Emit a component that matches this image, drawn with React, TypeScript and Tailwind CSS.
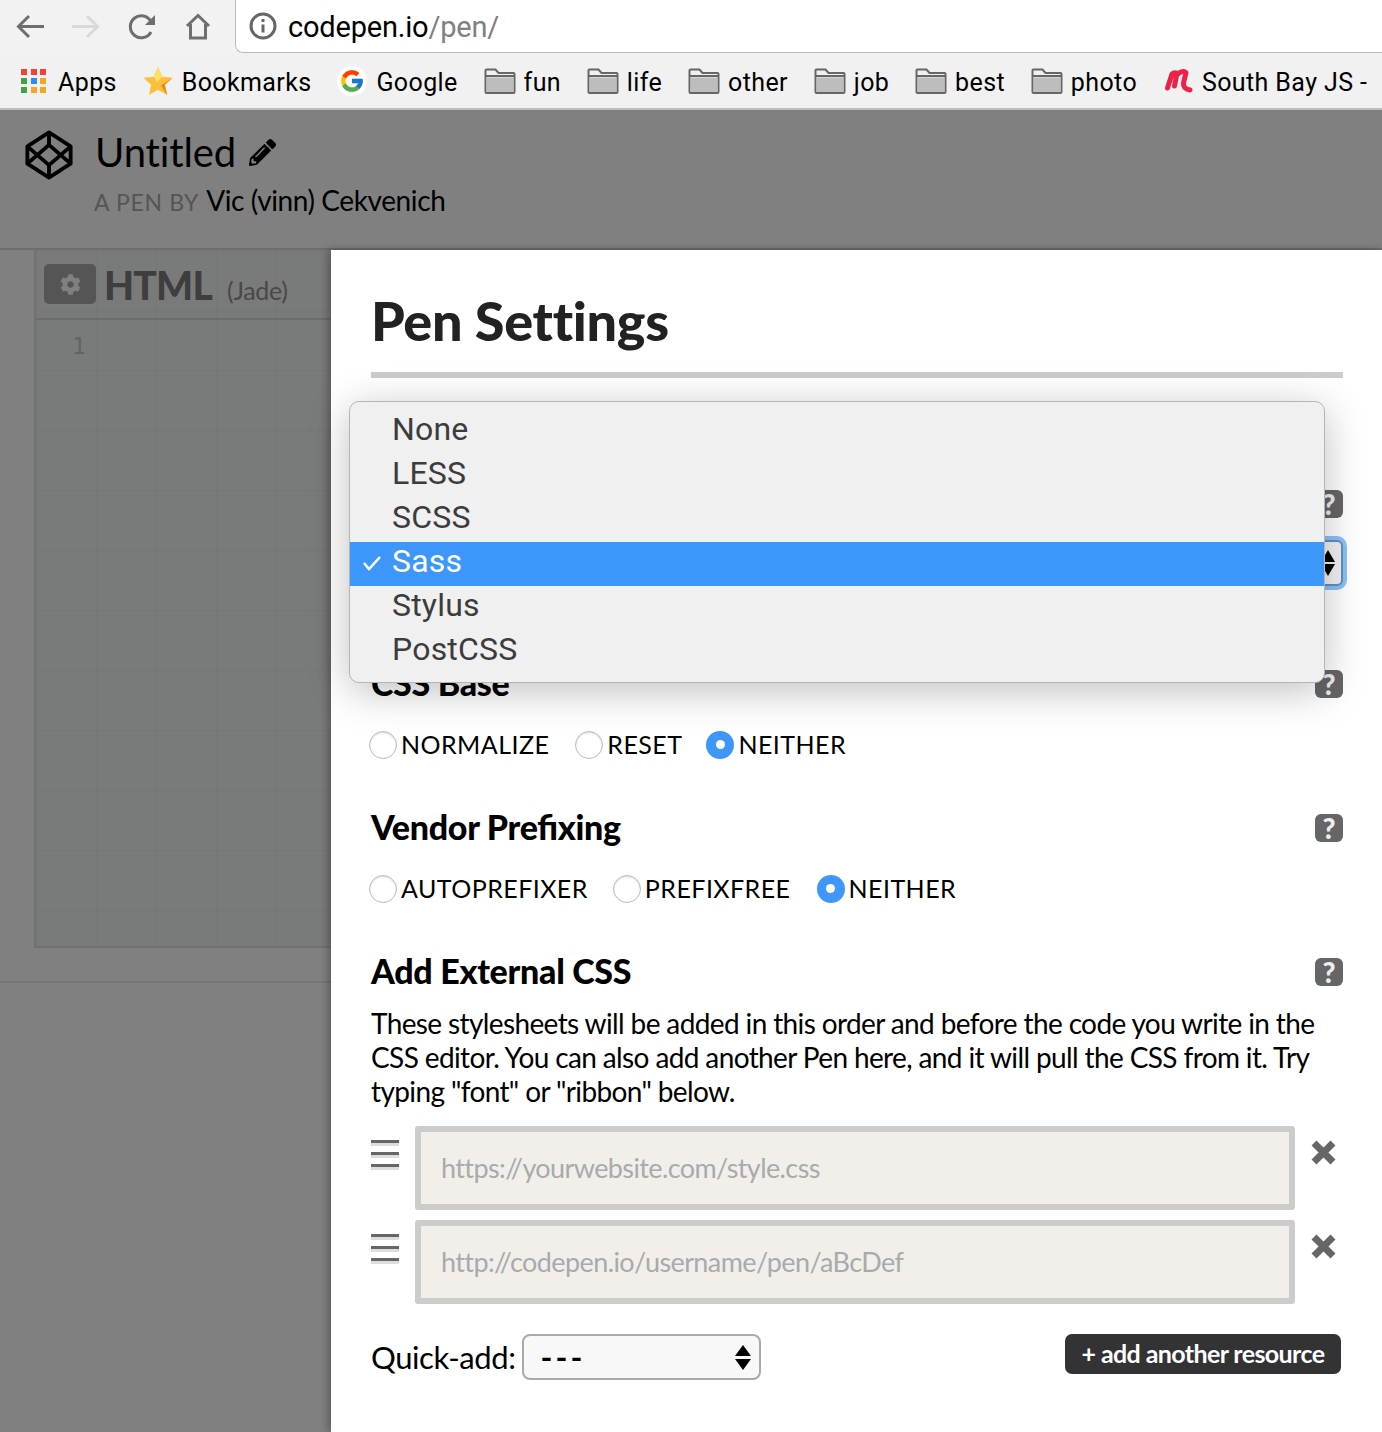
import { FaCog, FaPencilAlt } from "react-icons/fa";
import { FcGoogle } from "react-icons/fc";

const sans = "font-['Lato','Open_Sans',sans-serif]";
const system = "font-['Roboto','Liberation_Sans',sans-serif]";

const FolderIcon = () => (
  <svg width="32" height="26" viewBox="0 0 32 26" className="shrink-0">
    <path d="M1.5 24V2.5a1 1 0 0 1 1-1h9l3 3.5h15a1 1 0 0 1 1 1V24a1 1 0 0 1-1 1h-27a1 1 0 0 1-1-1z" fill="#f0f0f0" stroke="#666" strokeWidth="2" />
    <path d="M2.5 9.5h27V24h-27z" fill="#bdbdbd" />
    <path d="M1.5 8h29" stroke="#666" strokeWidth="2" />
  </svg>
);

const AppsIcon = () => (
  <div className="grid grid-cols-3 gap-[3px] w-[26px] shrink-0">
    {["#f44336", "#f44336", "#f44336", "#43a047", "#2d8cf0", "#f5a623", "#43a047", "#f5a623", "#f5a623"].map((c, i) => (
      <span key={i} className="h-[6px] w-[6px]" style={{ backgroundColor: c }} />
    ))}
  </div>
);

const StarIcon = () => (
  <svg width="30" height="30" viewBox="0 0 32 32" className="shrink-0">
    <path d="M16 1l4.600 10.400 11 1.100-8.300 7.400 2.400 11L16 25.200 6.300 30.900l2.400-11L.4 12.500l11-1.100z" fill="#fbbf3a" />
    <path d="M16 1l4.600 10.400-5.600 5.600-3.600-5.600z" fill="#fde068" />
    <path d="M31.600 12.500l-8.300 7.400 2.400 11-6.500-10z" fill="#e08e1b" />
  </svg>
);

const MeetupIcon = () => (
  <svg width="31" height="30" viewBox="0 0 31 30" className="shrink-0">
    <path d="M4.500 22L9 8Q11 6 14 7L11.500 20M15 8Q19 4 23 6.500L20.500 17Q20 23 27 24" fill="none" stroke="#ee2048" strokeWidth="5" strokeLinecap="round" strokeLinejoin="round" />
  </svg>
);

const Bookmark = ({ icon, label, gap = "gap-2" }: { icon: React.ReactNode; label: string; gap?: string }) => (
  <div className={`flex items-center shrink-0 ${gap}`}>
    {icon}
    <span className="mt-[5px]">{label}</span>
  </div>
);

const HelpBadge = () => (
  <div className={`flex h-[28px] w-[28px] items-center justify-center rounded-[6px] bg-[#666] text-[28px] font-black text-[#eee] ${sans}`}>?</div>
);

const Radio = ({ label, checked, gap }: { label: string; checked?: boolean; gap: string }) => (
  <div className={`flex items-center ${gap}`}>
    {checked ? (
      <span className="flex h-[28px] w-[28px] items-center justify-center rounded-full bg-[#3f97f9]">
        <span className="h-[9px] w-[9px] rounded-full bg-white" />
      </span>
    ) : (
      <span className="h-[28px] w-[28px] rounded-full border border-[#bbb] bg-white shadow-[inset_0_1px_2px_rgba(0,0,0,0.15)]" />
    )}
    <span className="ml-[4px] tracking-[0.45px]">{label}</span>
  </div>
);

const Heading = ({ title }: { title: string }) => (
  <div className="flex h-[44px] items-center justify-between">
    <h3 className="pb-[4px] text-[34px] font-black tracking-[-0.3px] text-black [font-feature-settings:'liga'_1]">{title}</h3>
    <HelpBadge />
  </div>
);

const ResourceRow = ({ placeholder }: { placeholder: string }) => (
  <div className="flex items-start">
    <div className="mt-[14px] flex w-[28px] flex-col gap-[6px]">
      {[0, 1, 2].map((i) => (
        <span key={i} className="h-[6px] border-t-[3px] border-[#666] bg-[#ddd]" />
      ))}
    </div>
    <div className="ml-[16px] flex h-[84px] w-[880px] items-center rounded-[3px] border-[6px] border-[#ccc] bg-[#f2efea] pl-[20px] text-[27px] tracking-[-0.6px] text-[#aaa]">
      {placeholder}
    </div>
    <svg width="25" height="25" viewBox="0 0 25 25" fill="none" stroke="#666" strokeWidth="7" className="ml-[16px] mt-[14px] shrink-0">
      <path d="M3 3l19 19M22 3L3 22" />
    </svg>
  </div>
);

export default function App() {
  return (
    <div className={`flex h-[1432px] w-[1382px] flex-col overflow-hidden bg-[#808080] ${sans}`}>
      {/* Browser toolbar */}
      <div className="flex h-[53px] shrink-0 items-center bg-[#f2f2f2]">
        <div className="flex w-[235px] shrink-0 items-center pl-[16px] gap-[28px]">
          <svg width="28" height="28" viewBox="0 0 28 28" fill="none" stroke="#6e6e6e" strokeWidth="3"><path d="M28 13.500H3M13 3L2.500 13.500 13 24" /></svg>
          <svg width="28" height="28" viewBox="0 0 28 28" fill="none" stroke="#d9d9d9" strokeWidth="3"><path d="M0 13.500h25M15 3l10.500 10.500L15 24" /></svg>
          <svg width="28" height="28" viewBox="0 0 28 28" fill="none" stroke="#6e6e6e" strokeWidth="3"><path d="M23 19a11 11 0 1 1 0-10.500" /><path d="M27 2v10H17z" fill="#6e6e6e" stroke="none" /></svg>
          <svg width="28" height="28" viewBox="0 0 28 28" fill="none" stroke="#6e6e6e" strokeWidth="3"><path d="M3 13L14 2.500 25 13M6.500 11v14h15V11" /></svg>
        </div>
        <div className={`flex h-[53px] flex-1 items-center rounded-bl-[8px] border-b border-l border-[#bbb] bg-white pl-[13px] text-[29px] tracking-[-0.2px] ${system}`}>
          <svg width="28" height="28" viewBox="0 0 28 28" fill="none" stroke="#666" strokeWidth="3" className="shrink-0">
            <circle cx="14" cy="14" r="12" />
            <path d="M14 12.500v8M14 7v3" />
          </svg>
          <span className="ml-[11px] mt-[4px] text-black">codepen.io</span>
          <span className="mt-[4px] text-[#808080]">/pen/</span>
        </div>
      </div>

      {/* Bookmarks bar */}
      <div className={`flex h-[57px] shrink-0 items-center gap-[25.8px] overflow-hidden border-b-2 border-[#bdbdbd] bg-[#f1f1f1] pl-[21px] text-[25px] tracking-[0.4px] text-black ${system}`}>
        <Bookmark icon={<AppsIcon />} label="Apps" gap="gap-[11px]" />
        <Bookmark icon={<StarIcon />} label="Bookmarks" gap="gap-[9px]" />
        <Bookmark
          icon={
            <span className="flex h-[30px] w-[30px] items-center justify-center rounded-full bg-white">
              <FcGoogle size={26} />
            </span>
          }
          label="Google"
          gap="gap-[9px]"
        />
        <Bookmark icon={<FolderIcon />} label="fun" />
        <Bookmark icon={<FolderIcon />} label="life" />
        <Bookmark icon={<FolderIcon />} label="other" />
        <Bookmark icon={<FolderIcon />} label="job" />
        <Bookmark icon={<FolderIcon />} label="best" />
        <Bookmark icon={<FolderIcon />} label="photo" />
        <Bookmark icon={<MeetupIcon />} label="South Bay JS -" />
      </div>

      {/* Pen header, dimmed behind the modal */}
      <div className="flex h-[140px] shrink-0 items-start border-b-2 border-[#6e6e6e] pl-[24px] pt-[20px]">
        <svg width="50" height="50" viewBox="0 0 50 52" fill="none" stroke="#000" strokeWidth="4" strokeLinejoin="round" className="shrink-0">
          <path d="M25 2.500L47.500 17v18L25 49.500 2.500 35V17zM25 2.500v13M25 36.500v13M2.500 17L25 36.500 47.500 17M2.500 35L25 15.500 47.500 35" />
        </svg>
        <div className="ml-[20px] flex flex-col">
          <div className="flex h-[44px] items-center">
            <span className="ml-[1px] text-[40px] tracking-[-0.15px] text-black">Untitled</span>
            <FaPencilAlt className="ml-[13px] text-black" size={27} />
          </div>
          <div className="mt-[5px] flex h-[34px] items-baseline">
            <span className="text-[23px] tracking-[0.65px] text-[#555]">A PEN BY</span>
            <span className="ml-[7px] text-[28px] tracking-[-0.4px] text-black">Vic (vinn) Cekvenich</span>
          </div>
        </div>
      </div>

      <div className="relative flex min-h-0 flex-1">
        {/* Editor column */}
        <div className="flex w-[331px] shrink-0 flex-col">
          <div className="flex h-[698px] shrink-0 pl-[34px]">
            <div className="flex-1 border-l-2 border-b-2 border-[#727272] bg-[#797b7a] bg-[linear-gradient(#757776_1px,transparent_1px),linear-gradient(90deg,#757776_1px,transparent_1px)] bg-[size:60px_60px]">
              <div className="flex h-[70px] items-center border-b-2 border-[#6c6c6c] pl-[8px]">
                <div className="flex h-[40px] w-[52px] items-center justify-center rounded-[5px] bg-[#555]">
                  <FaCog className="text-[#808080]" size={21} />
                </div>
                <span className="ml-[8px] mt-[2px] text-[39px] font-black tracking-[-0.8px] text-[#3e3e3e]">HTML</span>
                <span className="ml-[15px] mt-[14px] text-[25px] tracking-[-0.3px] text-[#484848]">(Jade)</span>
              </div>
              <div className="pl-[36px] pt-[9px] font-['DejaVu_Sans_Mono',monospace] text-[23px] leading-[34px] text-[#636363]">1</div>
            </div>
          </div>
          <div className="h-[35px] shrink-0 border-b-2 border-[#767676]" />
        </div>

        {/* Settings modal */}
        <div className="flex-1 bg-white pl-[40px] pr-[39px] shadow-[-3px_0_8px_rgba(0,0,0,0.3)]">
          <h2 className="pt-[39px] text-[54px] font-black leading-[64px] tracking-[-0.3px] text-[#222]">Pen Settings</h2>
          <div className="mt-[19px] h-[6px] bg-[#ccc]" />

          <div className="mt-[104px]">
            <Heading title="CSS Preprocessor" />
          </div>
          <div className="mt-[14px] flex h-[46px] items-center justify-end rounded-[6px] border-2 border-[#5f90c5] bg-[#f2f2f2] pr-[6px] shadow-[0_0_0_4px_#8dc0f7]">
            <span className="flex flex-col gap-[2px]">
              <span className="h-0 w-0 border-x-[7px] border-b-[12px] border-x-transparent border-b-black" />
              <span className="h-0 w-0 border-x-[7px] border-t-[12px] border-x-transparent border-t-black" />
            </span>
          </div>

          <div className="mt-[76px]">
            <Heading title="CSS Base" />
          </div>
          <div className="ml-[-2px] mt-[24px] flex h-[29px] items-center text-[25px] text-black">
            <Radio label="NORMALIZE" gap="mr-[26px]" />
            <Radio label="RESET" gap="mr-[24px]" />
            <Radio label="NEITHER" checked gap="" />
          </div>

          <div className="mt-[47px]">
            <Heading title="Vendor Prefixing" />
          </div>
          <div className="ml-[-2px] mt-[24px] flex h-[29px] items-center text-[25px] text-black">
            <Radio label="AUTOPREFIXER" gap="mr-[25px]" />
            <Radio label="PREFIXFREE" gap="mr-[26px]" />
            <Radio label="NEITHER" checked gap="" />
          </div>

          <div className="mt-[47px]">
            <Heading title="Add External CSS" />
          </div>
          <p className="mt-[12px] text-[28px] leading-[34px] tracking-[-0.62px] text-black">
            These stylesheets will be added in this order and before the code you write in the CSS editor. You can also add another Pen here, and it will pull the CSS from it. Try typing "font" or "ribbon" below.
          </p>

          <div className="mt-[18px] flex flex-col gap-[10px]">
            <ResourceRow placeholder="https://yourwebsite.com/style.css" />
            <ResourceRow placeholder="http://codepen.io/username/pen/aBcDef" />
          </div>

          <div className="mt-[30px] flex items-start justify-between pr-[2px]">
            <div className="flex items-center">
              <span className="text-[31px] tracking-[-0.4px] text-black">Quick-add:</span>
              <div className="ml-[6px] flex h-[46px] w-[239px] items-center justify-between rounded-[8px] border-2 border-[#aaa] bg-[#f8f8f8] pl-[17px] pr-[8px]">
                <span className="text-[32px] font-bold leading-none tracking-[3px] text-black">---</span>
                <span className="flex flex-col gap-[3px]">
                  <span className="h-0 w-0 border-x-[8px] border-b-[11px] border-x-transparent border-b-black" />
                  <span className="h-0 w-0 border-x-[8px] border-t-[11px] border-x-transparent border-t-black" />
                </span>
              </div>
            </div>
            <button className="flex h-[40px] w-[276px] items-center justify-center rounded-[7px] bg-[#333336] text-[25px] font-bold tracking-[-0.6px] text-white">
              + add another resource
            </button>
          </div>
        </div>

        {/* Native select menu lying open over the modal */}
        <div className={`absolute left-[349px] top-[151px] w-[976px] rounded-[10px] border border-[#b5b5b5] bg-[#f0f0f0] py-[8px] text-[32px] leading-[38px] tracking-[0.2px] text-[#3c3c3c] shadow-[0_8px_40px_rgba(0,0,0,0.25)] ${system}`}>
          {["None", "LESS", "SCSS", "Sass", "Stylus", "PostCSS"].map((option) => (
            <div key={option} className={option === "Sass" ? "relative h-[44px] bg-[#3d97fa] pl-[42px] text-white" : "h-[44px] pl-[42px]"}>
              {option === "Sass" && (
                <svg width="20" height="16" viewBox="0 0 20 16" fill="none" stroke="#fff" strokeWidth="2.500" className="absolute left-[12px] top-[13px]">
                  <path d="M2 8l5 6L18 2" />
                </svg>
              )}
              {option}
            </div>
          ))}
        </div>
      </div>
    </div>
  );
}
